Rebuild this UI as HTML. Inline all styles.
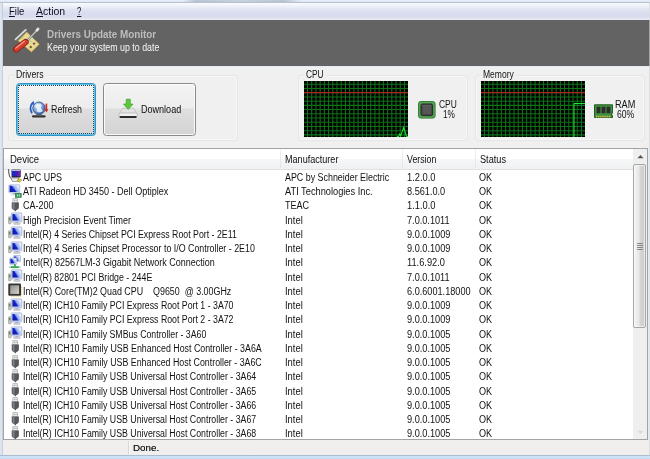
<!DOCTYPE html>
<html lang="en"><head><meta charset="utf-8"><title>Drivers Update Monitor</title>
<style>
html,body{margin:0;padding:0}
body{width:650px;height:459px;overflow:hidden;position:relative;background:#e4ecf6;font-family:"Liberation Sans",sans-serif;color:#111}
#root{position:absolute;left:0;top:0;width:650px;height:459px;will-change:transform;background:#e4ecf6}
.a{position:absolute}
.t{position:absolute;white-space:nowrap;transform-origin:0 50%}
.grp{position:absolute;border:1px solid #e6e6e6;border-radius:3px;box-sizing:border-box;box-shadow:inset 0 0 0 1px #f6f6f6}
.gl{position:absolute;background:#f0f0f0;height:10px}
.btn{position:absolute;box-sizing:border-box;border:1px solid #8a8a8a;border-radius:3.500px;background:linear-gradient(#f3f3f3,#ededed 46%,#dfdfdf 50%,#d3d3d3);box-shadow:inset 0 0 0 1px #fbfbfb}
.graph{position:absolute;background-color:#000;overflow:hidden}
.ic{position:absolute;left:0;top:0;width:15px;height:15px}
.r{position:absolute;left:0;width:630px;height:14px}
.hs{position:absolute;top:149px;width:1px;height:19px;background:linear-gradient(#f0f1f2,#e3e4e5)}
</style></head><body><div id="root">

<svg class="a" width="0" height="0" style="left:0;top:0"><defs><linearGradient id="scr" x1="0" y1=".75" x2="1" y2=".25"><stop offset="0" stop-color="#0a14a0"/><stop offset=".42" stop-color="#1426c8"/><stop offset=".56" stop-color="#8aa4f0"/><stop offset="1" stop-color="#eef2ff"/></linearGradient><linearGradient id="die" x1="0" y1="0" x2="1" y2="1"><stop offset="0" stop-color="#8e8e8c"/><stop offset="1" stop-color="#d2d2d0"/></linearGradient><linearGradient id="bat" x1="0" y1="0" x2="1" y2="0"><stop offset="0" stop-color="#1a2ec8"/><stop offset=".5" stop-color="#2a22b4"/><stop offset="1" stop-color="#8a1fb0"/></linearGradient></defs></svg>
<div class="a" style="left:0;top:0;width:650px;height:3px;background:linear-gradient(#e9f0fa,#dfe8f4 60%,#9aa6b2)"></div>
<div class="a" style="left:0;top:3px;width:3px;height:452px;background:linear-gradient(90deg,#dde5f1,#dbe3ef 70%,#aeb6c0)"></div>
<div class="a" style="left:649px;top:3px;width:1px;height:452px;background:#dcdfe4"></div><div class="a" style="left:649px;top:20px;width:1px;height:46px;background:#a4a4a4"></div>
<div class="a" style="left:0;top:455px;width:650px;height:4px;background:linear-gradient(#93a1b0,#c9dff5 28%,#d2e6fa 60%,#bcd7f3)"></div>
<div class="a" style="left:182px;top:0;width:120px;height:1.500px;background:linear-gradient(90deg,rgba(130,148,168,0),rgba(130,148,168,.45) 12%,rgba(130,148,168,.3) 50%,rgba(130,148,168,.45) 85%,rgba(130,148,168,0))"></div>
<div class="a" style="left:3px;top:3px;width:646px;height:17.500px;background:linear-gradient(#fafbfe,#eef1f9 18%,#dee2f1 40%,#d8dcee 62%,#d9ddee 78%,#e6e9f4 90%,#f4f5fa)"></div>
<span class="t" id="mFile" style="left:9.20px;top:6.10px;font-size:10.1px;line-height:12px;transform:scaleX(0.9405);color:#101020"><u>F</u>ile</span>
<span class="t" id="mAction" style="left:36.00px;top:6.10px;font-size:10.1px;line-height:12px;transform:scaleX(1.0370);color:#101020"><u>A</u>ction</span>
<span class="t" id="mQ" style="left:77.00px;top:6.10px;font-size:10.1px;line-height:12px;transform:scaleX(0.7644);color:#101020"><u>?</u></span>
<div class="a" style="left:3px;top:20.200px;width:646px;height:46.300px;background:#636363"></div>
<svg class="a" style="left:8px;top:22px" width="40" height="40" viewBox="8 22 40 40"><path d="M27.200 32.600L39.900 44.800 32 52.600 18.500 41.300z" fill="#4e4a40" opacity=".55"/><path d="M26.700 32L39.400 44.200 31.500 52 18 40.700z" fill="#e9d994" stroke="#b89e52" stroke-width=".8"/><path d="M30.700 45.400l1.600 1.500-1.500 1.500-1.600-1.500zM34 42.200l1.500 1.500-1.400 1.400-1.600-1.500z" fill="#6a5a3a"/><path d="M27.500 43l1 1M30 40.500l1 1M33.500 38.500l1 1" stroke="#5aa0c0" stroke-width="1"/><path d="M21 38.500l2-2" stroke="#a8c848" stroke-width="1.200"/><path d="M15.600 39.600L25.800 30" stroke="#7c7c7c" stroke-width="2.800" stroke-linecap="round"/><path d="M15.600 39.300L25.800 29.700" stroke="#e4e4e4" stroke-width="1.500" stroke-linecap="round"/><path d="M27 41L36.800 30.400" stroke="#6e6e6e" stroke-width="2"/><path d="M27 41L36.800 30.400" stroke="#d2d2d2" stroke-width="1.100"/><ellipse cx="37.400" cy="29.700" rx="2.500" ry="1.400" transform="rotate(-48 37.400 29.700)" fill="#f0f0f0" stroke="#8a8a8a" stroke-width=".4"/><path d="M16.300 49.300L25.600 42" stroke="#86190f" stroke-width="6.200" stroke-linecap="round"/><path d="M16.300 49.300L25.600 42" stroke="#d63b2b" stroke-width="4.800" stroke-linecap="round"/><path d="M15.800 48L24.400 41.300" stroke="#f3a092" stroke-width="1.300" stroke-linecap="round"/></svg>
<span class="t" id="title" style="left:46.80px;top:28.54px;font-size:10px;line-height:12px;transform:scaleX(0.9867);font-weight:bold;color:#bdbdbd">Drivers Update Monitor</span>
<span class="t" id="sub" style="left:47.40px;top:42.33px;font-size:10px;line-height:12px;transform:scaleX(0.8823);color:#f6f6f6">Keep your system up to date</span>
<div class="a" style="left:3px;top:66.500px;width:646px;height:82px;background:#f0f0f0"></div>
<div class="grp" style="left:8px;top:75px;width:230px;height:66px"></div>
<div class="gl" style="left:14px;top:70px;width:31px"></div>
<span class="t" id="gDrivers" style="left:15.80px;top:68.53px;font-size:10px;line-height:12px;transform:scaleX(0.8684);">Drivers</span>
<div class="grp" style="left:298px;top:75px;width:170px;height:66px"></div>
<div class="gl" style="left:304px;top:70px;width:22px"></div>
<span class="t" id="gCPU" style="left:306.20px;top:68.53px;font-size:10px;line-height:12px;transform:scaleX(0.8337);">CPU</span>
<div class="grp" style="left:475px;top:75px;width:170px;height:66px"></div>
<div class="gl" style="left:481px;top:70px;width:35px"></div>
<span class="t" id="gMem" style="left:483.00px;top:68.53px;font-size:10px;line-height:12px;transform:scaleX(0.8526);">Memory</span>
<div class="btn" style="left:16px;top:83px;width:80px;height:53px;border:1px solid #2f93c6;box-shadow:inset 0 0 0 1px #63bfe8"><div class="a" style="left:1px;top:1px;right:1px;bottom:1px;border:1px dotted #1f4656;border-radius:1px"></div></div>
<svg class="a" style="left:28px;top:100px" width="21" height="19" viewBox="28 100 21 19"><defs><radialGradient id="glb" cx=".35" cy=".3" r=".8"><stop offset="0" stop-color="#e6f0fc"/><stop offset=".45" stop-color="#7fa6dc"/><stop offset="1" stop-color="#2f5aa6"/></radialGradient></defs><rect x="32" y="115.200" width="13.600" height="2.300" rx="1.100" fill="#333"/><rect x="36.300" y="113.600" width="5.400" height="2" fill="#5d6470"/><circle cx="39" cy="108.200" r="6.200" fill="url(#glb)" stroke="#3b5688" stroke-width=".9"/><path d="M35.200 105.400c1.600-1.800 4.400-2.200 6.400-1 .4 1.400-.8 2.400-.4 3.800.4 1.200 1.600 1.600 1.400 3-1.800 1.400-4.600 1.400-6.200-.2.800-1.400.4-2.400-.2-3.400-.4-.8-1-1.400-1-2.200z" fill="#eef4fc" opacity=".85"/><path d="M32.800 102.600a9 9 0 0 0-.8 10.600" fill="none" stroke="#2a5cc4" stroke-width="1.700"/><path d="M30.600 104.200l3-3.400.9 3.900z" fill="#2a5cc4"/><path d="M46.400 103.600v6.600" stroke="#d8261e" stroke-width="1.700"/><path d="M44.400 109.200h4l-2 3.400z" fill="#d8261e"/></svg>
<span class="t" id="bRefresh" style="left:51.40px;top:104.47px;font-size:10.2px;line-height:12px;transform:scaleX(0.8693);">Refresh</span>
<div class="btn" style="left:103px;top:83px;width:93px;height:53px"></div>
<svg class="a" style="left:118px;top:98px" width="21" height="22" viewBox="118 98 21 22"><path d="M119.200 114.600l3.300-6.400h11.300l3.200 6.400z" fill="#e2e2e2" stroke="#b4b4b4" stroke-width=".6"/><rect x="119" y="113" width="18.200" height="4" rx="1.200" fill="#f1f1f1" stroke="#a6a6a6" stroke-width=".6"/><rect x="119.600" y="116" width="17" height="1.900" rx=".6" fill="#2c2c2c"/><path d="M126.200 99.200h4.100v4.800h2.700l-4.750 5.400-4.750-5.400h2.700z" fill="#5ccb3b" stroke="#2f9420" stroke-width=".6"/></svg>
<span class="t" id="bDownload" style="left:141.40px;top:104.47px;font-size:10.2px;line-height:12px;transform:scaleX(0.8874);">Download</span>
<svg class="a" style="left:303.7px;top:81px" width="104" height="56" viewBox="0 0 104 56"><rect width="104" height="56" fill="#000"/><g stroke="#0c7319" stroke-width="1.050"><path d="M3.50 0V56"/><path d="M7.71 0V56"/><path d="M11.93 0V56"/><path d="M16.14 0V56"/><path d="M20.36 0V56"/><path d="M24.57 0V56"/><path d="M28.79 0V56"/><path d="M33.00 0V56"/><path d="M37.22 0V56"/><path d="M41.44 0V56"/><path d="M45.65 0V56"/><path d="M49.87 0V56"/><path d="M54.08 0V56"/><path d="M58.30 0V56"/><path d="M62.51 0V56"/><path d="M66.73 0V56"/><path d="M70.94 0V56"/><path d="M75.16 0V56"/><path d="M79.37 0V56"/><path d="M83.59 0V56"/><path d="M87.80 0V56"/><path d="M92.02 0V56"/><path d="M96.23 0V56"/><path d="M100.45 0V56"/><path d="M0 3.30H104"/><path d="M0 7.51H104"/><path d="M0 11.73H104"/><path d="M0 15.95H104"/><path d="M0 20.16H104"/><path d="M0 24.38H104"/><path d="M0 28.59H104"/><path d="M0 32.80H104"/><path d="M0 37.02H104"/><path d="M0 41.23H104"/><path d="M0 45.45H104"/><path d="M0 49.67H104"/><path d="M0 53.88H104"/></g><path d="M0 11.700H104" stroke="#a82519" stroke-width="1.300"/><path d="M93 55.500h1.500l1.200-2.500 1 2 3-8.700 2.800 9.200h1.500" fill="none" stroke="#19e02c" stroke-width="1.050"/></svg>
<svg class="a" style="left:480.5px;top:81px" width="104" height="56" viewBox="0 0 104 56"><rect width="104" height="56" fill="#000"/><g stroke="#0c7319" stroke-width="1.050"><path d="M3.50 0V56"/><path d="M7.71 0V56"/><path d="M11.93 0V56"/><path d="M16.14 0V56"/><path d="M20.36 0V56"/><path d="M24.57 0V56"/><path d="M28.79 0V56"/><path d="M33.00 0V56"/><path d="M37.22 0V56"/><path d="M41.44 0V56"/><path d="M45.65 0V56"/><path d="M49.87 0V56"/><path d="M54.08 0V56"/><path d="M58.30 0V56"/><path d="M62.51 0V56"/><path d="M66.73 0V56"/><path d="M70.94 0V56"/><path d="M75.16 0V56"/><path d="M79.37 0V56"/><path d="M83.59 0V56"/><path d="M87.80 0V56"/><path d="M92.02 0V56"/><path d="M96.23 0V56"/><path d="M100.45 0V56"/><path d="M0 3.30H104"/><path d="M0 7.51H104"/><path d="M0 11.73H104"/><path d="M0 15.95H104"/><path d="M0 20.16H104"/><path d="M0 24.38H104"/><path d="M0 28.59H104"/><path d="M0 32.80H104"/><path d="M0 37.02H104"/><path d="M0 41.23H104"/><path d="M0 45.45H104"/><path d="M0 49.67H104"/><path d="M0 53.88H104"/></g><path d="M0 11.700H104" stroke="#a82519" stroke-width="1.300"/><path d="M93 56V22.500H104" fill="none" stroke="#22ea34" stroke-width="1"/></svg>
<svg class="a" style="left:418px;top:101px" width="18" height="18" viewBox="0 0 18 18"><rect x=".5" y=".5" width="16.600" height="16.600" rx="2.300" fill="#4a984a" stroke="#357f35"/><rect x="1.600" y="1.600" width="14.400" height="14.400" rx="1.800" fill="none" stroke="#62ac62" stroke-width=".7"/><rect x="3" y="3" width="11.600" height="11.600" rx="1.500" fill="#454545" stroke="#2c2c2c"/><rect x="4.600" y="4.600" width="8.400" height="8.400" rx=".6" fill="#565656"/><path d="M4.600 4.600h8.400" stroke="#6a6a6a" stroke-width=".8"/></svg>
<span class="t" id="cpu1" style="left:439.40px;top:98.53px;font-size:10px;line-height:12px;transform:scaleX(0.8430);">CPU</span>
<span class="t" id="cpu2" style="left:443.20px;top:109.23px;font-size:10px;line-height:12px;transform:scaleX(0.8242);">1%</span>
<svg class="a" style="left:593.500px;top:103.500px" width="19" height="16" viewBox="0 0 19 16"><path d="M.5 .8h18v8.500h-1v2h1v2.200h-18z" fill="#3f8f3f" stroke="#205f20"/><rect x="2.600" y="2.800" width="3.800" height="6.400" fill="#2c2c2c"/><rect x="7.600" y="2.800" width="3.800" height="6.400" fill="#2c2c2c"/><rect x="12.600" y="2.800" width="3.800" height="6.400" fill="#2c2c2c"/><path d="M2 12.600h15" stroke="#d9bb4a" stroke-width="1.800" stroke-dasharray="1.300 .8"/></svg>
<span class="t" id="ram1" style="left:615.40px;top:98.53px;font-size:10px;line-height:12px;transform:scaleX(0.9134);">RAM</span>
<span class="t" id="ram2" style="left:617.20px;top:109.23px;font-size:10px;line-height:12px;transform:scaleX(0.8600);">60%</span>
<div class="a" style="left:3px;top:147.500px;width:645px;height:292px;background:#fff;border:1px solid #a3a3a3;box-sizing:border-box"></div>
<div class="a" style="left:4px;top:149px;width:629px;height:21px;background:linear-gradient(#fff,#fff 48%,#f6f7f8 52%,#eff0f1);border-bottom:1px solid #dfe0e1;box-sizing:border-box"></div>
<div class="hs" style="left:280px"></div>
<div class="hs" style="left:402px"></div>
<div class="hs" style="left:474.5px"></div>
<div class="hs" style="left:632.5px"></div>
<span class="t" id="hDev" style="left:10.00px;top:153.94px;font-size:10.0px;line-height:12px;transform:scaleX(0.9517);">Device</span>
<span class="t" id="hMan" style="left:285.20px;top:153.94px;font-size:10.0px;line-height:12px;transform:scaleX(0.9065);">Manufacturer</span>
<span class="t" id="hVer" style="left:407.20px;top:153.94px;font-size:10.0px;line-height:12px;transform:scaleX(0.8787);">Version</span>
<span class="t" id="hSta" style="left:479.50px;top:153.94px;font-size:10.0px;line-height:12px;transform:scaleX(0.9168);">Status</span>
<svg class="ic" style="left:8px;top:168.30px" viewBox="0 0 15 15"><path d="M.6 1.200c.2 3.800.4 6.400 1.600 8.200 1 1.600 2.200 2.400 3.600 3.200" fill="none" stroke="#2c2c2c" stroke-width=".9"/><rect x="3.500" y="1.400" width="9.200" height="8.200" rx="1" fill="#23232b"/><rect x="4" y="2.400" width="8.200" height="6" fill="url(#bat)"/><rect x="4" y="1.800" width="8.200" height="1" fill="#dfe6f6"/><path d="M3 10h7.600l.9 3.400h-7.200z" fill="#ececec" stroke="#555" stroke-width=".5"/><path d="M9 12.400l2.400-1.600 2.400 1.300-2.400 2z" fill="#e6d422" stroke="#7f7208" stroke-width=".5"/></svg>
<span class="t" id="d0" style="left:22.80px;top:171.84px;font-size:10.0px;line-height:12px;transform:scaleX(0.8883);">APC UPS</span>
<span class="t" id="m0" style="left:285.00px;top:171.84px;font-size:10.0px;line-height:12px;transform:scaleX(0.8885);">APC by Schneider Electric</span>
<span class="t" id="v0" style="left:406.80px;top:171.84px;font-size:10.0px;line-height:12px;transform:scaleX(0.9317);">1.2.0.0</span>
<span class="t" id="s0" style="left:479.40px;top:171.84px;font-size:10.0px;line-height:12px;transform:scaleX(0.9070);">OK</span>
<svg class="ic" style="left:8px;top:182.55px" viewBox="0 0 15 15"><rect x=".8" y="1.800" width="11" height="8" rx=".8" fill="#e3eafa" stroke="#93a2c4" stroke-width=".6"/><rect x="1.600" y="2.600" width="9.400" height="6.400" fill="url(#scr)"/><rect x="4.600" y="9.900" width="3" height="1.300" fill="#aeb4c2"/><rect x="2.600" y="11" width="5" height="1.300" rx=".5" fill="#d3d8e2"/><rect x="7.400" y="10.300" width="5.800" height="4" fill="#2f9a58" stroke="#1c6c3a" stroke-width=".6"/><rect x="8.800" y="11.400" width="1.300" height="2" fill="#a6e0b8"/><rect x="10.700" y="11.400" width="1.300" height="2" fill="#a6e0b8"/></svg>
<span class="t" id="d1" style="left:22.80px;top:186.09px;font-size:10.0px;line-height:12px;transform:scaleX(0.9062);">ATI Radeon HD 3450 - Dell Optiplex</span>
<span class="t" id="m1" style="left:285.00px;top:186.09px;font-size:10.0px;line-height:12px;transform:scaleX(0.9251);">ATI Technologies Inc.</span>
<span class="t" id="v1" style="left:406.80px;top:186.09px;font-size:10.0px;line-height:12px;transform:scaleX(0.9157);">8.561.0.0</span>
<span class="t" id="s1" style="left:479.40px;top:186.09px;font-size:10.0px;line-height:12px;transform:scaleX(0.9070);">OK</span>
<svg class="ic" style="left:8px;top:196.80px" viewBox="0 0 15 15"><rect x="4.900" y="1.700" width="4.600" height="4" fill="#ececec" stroke="#a4a4a4" stroke-width=".7"/><rect x="6" y="2.900" width=".9" height="1" fill="#9a9a9a"/><rect x="7.600" y="2.900" width=".9" height="1" fill="#9a9a9a"/><path d="M3.700 5.600h7.200v5c0 1.400-1.600 2.300-2.600 2.700l-1 1.200-1-1.200c-1-.4-2.600-1.300-2.600-2.700z" fill="#57575d"/><path d="M4.600 6h1.900v6.600c-1-.5-1.900-1.200-1.900-2.200z" fill="#7f7f86"/></svg>
<span class="t" id="d2" style="left:22.80px;top:200.34px;font-size:10.0px;line-height:12px;transform:scaleX(0.8996);">CA-200</span>
<span class="t" id="m2" style="left:285.00px;top:200.34px;font-size:10.0px;line-height:12px;transform:scaleX(0.9036);">TEAC</span>
<span class="t" id="v2" style="left:406.80px;top:200.34px;font-size:10.0px;line-height:12px;transform:scaleX(0.9317);">1.1.0.0</span>
<span class="t" id="s2" style="left:479.40px;top:200.34px;font-size:10.0px;line-height:12px;transform:scaleX(0.9070);">OK</span>
<svg class="ic" style="left:8px;top:211.05px" viewBox="0 0 15 15"><rect x=".4" y="5.800" width="2.800" height="7" rx=".8" fill="#c9cbbf" stroke="#8f9388" stroke-width=".6"/><rect x="1.100" y="7" width="1.200" height="2.400" fill="#5c7a5c"/><rect x="3.300" y="1.900" width="10.500" height="9" rx=".9" fill="#e3eafa" stroke="#93a2c4" stroke-width=".7"/><rect x="4.400" y="3" width="8.300" height="6.600" fill="url(#scr)"/><rect x="7.300" y="11" width="3" height="1.200" fill="#aeb4c2"/><rect x="5.600" y="12" width="6.600" height="1.400" rx=".6" fill="#d3d8e2" stroke="#9aa0ae" stroke-width=".4"/></svg>
<span class="t" id="d3" style="left:22.80px;top:214.59px;font-size:10.0px;line-height:12px;transform:scaleX(0.8955);">High Precision Event Timer</span>
<span class="t" id="m3" style="left:285.00px;top:214.59px;font-size:10.0px;line-height:12px;transform:scaleX(0.9415);">Intel</span>
<span class="t" id="v3" style="left:406.80px;top:214.59px;font-size:10.0px;line-height:12px;transform:scaleX(0.9156);">7.0.0.1011</span>
<span class="t" id="s3" style="left:479.40px;top:214.59px;font-size:10.0px;line-height:12px;transform:scaleX(0.9070);">OK</span>
<svg class="ic" style="left:8px;top:225.30px" viewBox="0 0 15 15"><rect x=".4" y="5.800" width="2.800" height="7" rx=".8" fill="#c9cbbf" stroke="#8f9388" stroke-width=".6"/><rect x="1.100" y="7" width="1.200" height="2.400" fill="#5c7a5c"/><rect x="3.300" y="1.900" width="10.500" height="9" rx=".9" fill="#e3eafa" stroke="#93a2c4" stroke-width=".7"/><rect x="4.400" y="3" width="8.300" height="6.600" fill="url(#scr)"/><rect x="7.300" y="11" width="3" height="1.200" fill="#aeb4c2"/><rect x="5.600" y="12" width="6.600" height="1.400" rx=".6" fill="#d3d8e2" stroke="#9aa0ae" stroke-width=".4"/></svg>
<span class="t" id="d4" style="left:22.80px;top:228.84px;font-size:10.0px;line-height:12px;transform:scaleX(0.8769);">Intel(R) 4 Series Chipset PCI Express Root Port - 2E11</span>
<span class="t" id="m4" style="left:285.00px;top:228.84px;font-size:10.0px;line-height:12px;transform:scaleX(0.9415);">Intel</span>
<span class="t" id="v4" style="left:406.80px;top:228.84px;font-size:10.0px;line-height:12px;transform:scaleX(0.9183);">9.0.0.1009</span>
<span class="t" id="s4" style="left:479.40px;top:228.84px;font-size:10.0px;line-height:12px;transform:scaleX(0.9070);">OK</span>
<svg class="ic" style="left:8px;top:239.55px" viewBox="0 0 15 15"><rect x=".4" y="5.800" width="2.800" height="7" rx=".8" fill="#c9cbbf" stroke="#8f9388" stroke-width=".6"/><rect x="1.100" y="7" width="1.200" height="2.400" fill="#5c7a5c"/><rect x="3.300" y="1.900" width="10.500" height="9" rx=".9" fill="#e3eafa" stroke="#93a2c4" stroke-width=".7"/><rect x="4.400" y="3" width="8.300" height="6.600" fill="url(#scr)"/><rect x="7.300" y="11" width="3" height="1.200" fill="#aeb4c2"/><rect x="5.600" y="12" width="6.600" height="1.400" rx=".6" fill="#d3d8e2" stroke="#9aa0ae" stroke-width=".4"/></svg>
<span class="t" id="d5" style="left:22.80px;top:243.09px;font-size:10.0px;line-height:12px;transform:scaleX(0.8836);">Intel(R) 4 Series Chipset Processor to I/O Controller - 2E10</span>
<span class="t" id="m5" style="left:285.00px;top:243.09px;font-size:10.0px;line-height:12px;transform:scaleX(0.9415);">Intel</span>
<span class="t" id="v5" style="left:406.80px;top:243.09px;font-size:10.0px;line-height:12px;transform:scaleX(0.9183);">9.0.0.1009</span>
<span class="t" id="s5" style="left:479.40px;top:243.09px;font-size:10.0px;line-height:12px;transform:scaleX(0.9070);">OK</span>
<svg class="ic" style="left:8px;top:253.80px" viewBox="0 0 15 15"><rect x="5.400" y="1.500" width="7.200" height="6" rx=".7" fill="#e3eafa" stroke="#93a2c4" stroke-width=".6"/><rect x="6.200" y="2.300" width="5.600" height="4.400" fill="url(#scr)"/><rect x="1.600" y="4" width="7.200" height="6.300" rx=".7" fill="#e3eafa" stroke="#93a2c4" stroke-width=".6"/><rect x="2.400" y="4.800" width="5.600" height="4.600" fill="url(#scr)"/><rect x="6" y="10.300" width="1.800" height="2.200" fill="#1f9e40"/><rect x=".9" y="12.300" width="11.800" height="1.800" rx=".4" fill="#c4c8c8"/><rect x="3" y="12.300" width="7.600" height="1.800" fill="#25ad48"/></svg>
<span class="t" id="d6" style="left:22.80px;top:257.34px;font-size:10.0px;line-height:12px;transform:scaleX(0.8982);">Intel(R) 82567LM-3 Gigabit Network Connection</span>
<span class="t" id="m6" style="left:285.00px;top:257.34px;font-size:10.0px;line-height:12px;transform:scaleX(0.9415);">Intel</span>
<span class="t" id="v6" style="left:406.80px;top:257.34px;font-size:10.0px;line-height:12px;transform:scaleX(0.9252);">11.6.92.0</span>
<span class="t" id="s6" style="left:479.40px;top:257.34px;font-size:10.0px;line-height:12px;transform:scaleX(0.9070);">OK</span>
<svg class="ic" style="left:8px;top:268.05px" viewBox="0 0 15 15"><rect x=".4" y="5.800" width="2.800" height="7" rx=".8" fill="#c9cbbf" stroke="#8f9388" stroke-width=".6"/><rect x="1.100" y="7" width="1.200" height="2.400" fill="#5c7a5c"/><rect x="3.300" y="1.900" width="10.500" height="9" rx=".9" fill="#e3eafa" stroke="#93a2c4" stroke-width=".7"/><rect x="4.400" y="3" width="8.300" height="6.600" fill="url(#scr)"/><rect x="7.300" y="11" width="3" height="1.200" fill="#aeb4c2"/><rect x="5.600" y="12" width="6.600" height="1.400" rx=".6" fill="#d3d8e2" stroke="#9aa0ae" stroke-width=".4"/></svg>
<span class="t" id="d7" style="left:22.80px;top:271.59px;font-size:10.0px;line-height:12px;transform:scaleX(0.8811);">Intel(R) 82801 PCI Bridge - 244E</span>
<span class="t" id="m7" style="left:285.00px;top:271.59px;font-size:10.0px;line-height:12px;transform:scaleX(0.9415);">Intel</span>
<span class="t" id="v7" style="left:406.80px;top:271.59px;font-size:10.0px;line-height:12px;transform:scaleX(0.9156);">7.0.0.1011</span>
<span class="t" id="s7" style="left:479.40px;top:271.59px;font-size:10.0px;line-height:12px;transform:scaleX(0.9070);">OK</span>
<svg class="ic" style="left:8px;top:282.30px" viewBox="0 0 15 15"><rect x=".3" y="1.500" width="12.700" height="12.300" rx="1" fill="#37332f"/><rect x="2.200" y="3.300" width="8.900" height="8.600" fill="url(#die)"/><path d="M3 14.300h10.400M13.600 5v9" stroke="#c9a83a" stroke-width=".7" stroke-dasharray=".9 .9"/></svg>
<span class="t" id="d8" style="left:22.80px;top:285.84px;font-size:10.0px;line-height:12px;transform:scaleX(0.8897);">Intel(R) Core(TM)2 Quad CPU&nbsp;&nbsp;&nbsp;&nbsp;Q9650&nbsp;&nbsp;@ 3.00GHz</span>
<span class="t" id="m8" style="left:285.00px;top:285.84px;font-size:10.0px;line-height:12px;transform:scaleX(0.9415);">Intel</span>
<span class="t" id="v8" style="left:406.80px;top:285.84px;font-size:10.0px;line-height:12px;transform:scaleX(0.9149);">6.0.6001.18000</span>
<span class="t" id="s8" style="left:479.40px;top:285.84px;font-size:10.0px;line-height:12px;transform:scaleX(0.9070);">OK</span>
<svg class="ic" style="left:8px;top:296.55px" viewBox="0 0 15 15"><rect x=".4" y="5.800" width="2.800" height="7" rx=".8" fill="#c9cbbf" stroke="#8f9388" stroke-width=".6"/><rect x="1.100" y="7" width="1.200" height="2.400" fill="#5c7a5c"/><rect x="3.300" y="1.900" width="10.500" height="9" rx=".9" fill="#e3eafa" stroke="#93a2c4" stroke-width=".7"/><rect x="4.400" y="3" width="8.300" height="6.600" fill="url(#scr)"/><rect x="7.300" y="11" width="3" height="1.200" fill="#aeb4c2"/><rect x="5.600" y="12" width="6.600" height="1.400" rx=".6" fill="#d3d8e2" stroke="#9aa0ae" stroke-width=".4"/></svg>
<span class="t" id="d9" style="left:22.80px;top:300.09px;font-size:10.0px;line-height:12px;transform:scaleX(0.8768);">Intel(R) ICH10 Family PCI Express Root Port 1 - 3A70</span>
<span class="t" id="m9" style="left:285.00px;top:300.09px;font-size:10.0px;line-height:12px;transform:scaleX(0.9415);">Intel</span>
<span class="t" id="v9" style="left:406.80px;top:300.09px;font-size:10.0px;line-height:12px;transform:scaleX(0.9183);">9.0.0.1009</span>
<span class="t" id="s9" style="left:479.40px;top:300.09px;font-size:10.0px;line-height:12px;transform:scaleX(0.9070);">OK</span>
<svg class="ic" style="left:8px;top:310.80px" viewBox="0 0 15 15"><rect x=".4" y="5.800" width="2.800" height="7" rx=".8" fill="#c9cbbf" stroke="#8f9388" stroke-width=".6"/><rect x="1.100" y="7" width="1.200" height="2.400" fill="#5c7a5c"/><rect x="3.300" y="1.900" width="10.500" height="9" rx=".9" fill="#e3eafa" stroke="#93a2c4" stroke-width=".7"/><rect x="4.400" y="3" width="8.300" height="6.600" fill="url(#scr)"/><rect x="7.300" y="11" width="3" height="1.200" fill="#aeb4c2"/><rect x="5.600" y="12" width="6.600" height="1.400" rx=".6" fill="#d3d8e2" stroke="#9aa0ae" stroke-width=".4"/></svg>
<span class="t" id="d10" style="left:22.80px;top:314.34px;font-size:10.0px;line-height:12px;transform:scaleX(0.8768);">Intel(R) ICH10 Family PCI Express Root Port 2 - 3A72</span>
<span class="t" id="m10" style="left:285.00px;top:314.34px;font-size:10.0px;line-height:12px;transform:scaleX(0.9415);">Intel</span>
<span class="t" id="v10" style="left:406.80px;top:314.34px;font-size:10.0px;line-height:12px;transform:scaleX(0.9183);">9.0.0.1009</span>
<span class="t" id="s10" style="left:479.40px;top:314.34px;font-size:10.0px;line-height:12px;transform:scaleX(0.9070);">OK</span>
<svg class="ic" style="left:8px;top:325.05px" viewBox="0 0 15 15"><rect x=".4" y="5.800" width="2.800" height="7" rx=".8" fill="#c9cbbf" stroke="#8f9388" stroke-width=".6"/><rect x="1.100" y="7" width="1.200" height="2.400" fill="#5c7a5c"/><rect x="3.300" y="1.900" width="10.500" height="9" rx=".9" fill="#e3eafa" stroke="#93a2c4" stroke-width=".7"/><rect x="4.400" y="3" width="8.300" height="6.600" fill="url(#scr)"/><rect x="7.300" y="11" width="3" height="1.200" fill="#aeb4c2"/><rect x="5.600" y="12" width="6.600" height="1.400" rx=".6" fill="#d3d8e2" stroke="#9aa0ae" stroke-width=".4"/></svg>
<span class="t" id="d11" style="left:22.80px;top:328.59px;font-size:10.0px;line-height:12px;transform:scaleX(0.8749);">Intel(R) ICH10 Family SMBus Controller - 3A60</span>
<span class="t" id="m11" style="left:285.00px;top:328.59px;font-size:10.0px;line-height:12px;transform:scaleX(0.9415);">Intel</span>
<span class="t" id="v11" style="left:406.80px;top:328.59px;font-size:10.0px;line-height:12px;transform:scaleX(0.9183);">9.0.0.1005</span>
<span class="t" id="s11" style="left:479.40px;top:328.59px;font-size:10.0px;line-height:12px;transform:scaleX(0.9070);">OK</span>
<svg class="ic" style="left:8px;top:339.30px" viewBox="0 0 15 15"><rect x="4.900" y="1.700" width="4.600" height="4" fill="#ececec" stroke="#a4a4a4" stroke-width=".7"/><rect x="6" y="2.900" width=".9" height="1" fill="#9a9a9a"/><rect x="7.600" y="2.900" width=".9" height="1" fill="#9a9a9a"/><path d="M3.700 5.600h7.200v5c0 1.400-1.600 2.300-2.600 2.700l-1 1.200-1-1.200c-1-.4-2.600-1.300-2.600-2.700z" fill="#57575d"/><path d="M4.600 6h1.900v6.600c-1-.5-1.900-1.200-1.900-2.200z" fill="#7f7f86"/></svg>
<span class="t" id="d12" style="left:22.80px;top:342.84px;font-size:10.0px;line-height:12px;transform:scaleX(0.8837);">Intel(R) ICH10 Family USB Enhanced Host Controller - 3A6A</span>
<span class="t" id="m12" style="left:285.00px;top:342.84px;font-size:10.0px;line-height:12px;transform:scaleX(0.9415);">Intel</span>
<span class="t" id="v12" style="left:406.80px;top:342.84px;font-size:10.0px;line-height:12px;transform:scaleX(0.9183);">9.0.0.1005</span>
<span class="t" id="s12" style="left:479.40px;top:342.84px;font-size:10.0px;line-height:12px;transform:scaleX(0.9070);">OK</span>
<svg class="ic" style="left:8px;top:353.55px" viewBox="0 0 15 15"><rect x="4.900" y="1.700" width="4.600" height="4" fill="#ececec" stroke="#a4a4a4" stroke-width=".7"/><rect x="6" y="2.900" width=".9" height="1" fill="#9a9a9a"/><rect x="7.600" y="2.900" width=".9" height="1" fill="#9a9a9a"/><path d="M3.700 5.600h7.200v5c0 1.400-1.600 2.300-2.600 2.700l-1 1.200-1-1.200c-1-.4-2.600-1.300-2.600-2.700z" fill="#57575d"/><path d="M4.600 6h1.900v6.600c-1-.5-1.900-1.200-1.900-2.200z" fill="#7f7f86"/></svg>
<span class="t" id="d13" style="left:22.80px;top:357.09px;font-size:10.0px;line-height:12px;transform:scaleX(0.8819);">Intel(R) ICH10 Family USB Enhanced Host Controller - 3A6C</span>
<span class="t" id="m13" style="left:285.00px;top:357.09px;font-size:10.0px;line-height:12px;transform:scaleX(0.9415);">Intel</span>
<span class="t" id="v13" style="left:406.80px;top:357.09px;font-size:10.0px;line-height:12px;transform:scaleX(0.9183);">9.0.0.1005</span>
<span class="t" id="s13" style="left:479.40px;top:357.09px;font-size:10.0px;line-height:12px;transform:scaleX(0.9070);">OK</span>
<svg class="ic" style="left:8px;top:367.80px" viewBox="0 0 15 15"><rect x="4.900" y="1.700" width="4.600" height="4" fill="#ececec" stroke="#a4a4a4" stroke-width=".7"/><rect x="6" y="2.900" width=".9" height="1" fill="#9a9a9a"/><rect x="7.600" y="2.900" width=".9" height="1" fill="#9a9a9a"/><path d="M3.700 5.600h7.200v5c0 1.400-1.600 2.300-2.600 2.700l-1 1.200-1-1.200c-1-.4-2.600-1.300-2.600-2.700z" fill="#57575d"/><path d="M4.600 6h1.900v6.600c-1-.5-1.900-1.200-1.900-2.200z" fill="#7f7f86"/></svg>
<span class="t" id="d14" style="left:22.80px;top:371.34px;font-size:10.0px;line-height:12px;transform:scaleX(0.8779);">Intel(R) ICH10 Family USB Universal Host Controller - 3A64</span>
<span class="t" id="m14" style="left:285.00px;top:371.34px;font-size:10.0px;line-height:12px;transform:scaleX(0.9415);">Intel</span>
<span class="t" id="v14" style="left:406.80px;top:371.34px;font-size:10.0px;line-height:12px;transform:scaleX(0.9183);">9.0.0.1005</span>
<span class="t" id="s14" style="left:479.40px;top:371.34px;font-size:10.0px;line-height:12px;transform:scaleX(0.9070);">OK</span>
<svg class="ic" style="left:8px;top:382.05px" viewBox="0 0 15 15"><rect x="4.900" y="1.700" width="4.600" height="4" fill="#ececec" stroke="#a4a4a4" stroke-width=".7"/><rect x="6" y="2.900" width=".9" height="1" fill="#9a9a9a"/><rect x="7.600" y="2.900" width=".9" height="1" fill="#9a9a9a"/><path d="M3.700 5.600h7.200v5c0 1.400-1.600 2.300-2.600 2.700l-1 1.200-1-1.200c-1-.4-2.600-1.300-2.600-2.700z" fill="#57575d"/><path d="M4.600 6h1.900v6.600c-1-.5-1.900-1.200-1.900-2.200z" fill="#7f7f86"/></svg>
<span class="t" id="d15" style="left:22.80px;top:385.59px;font-size:10.0px;line-height:12px;transform:scaleX(0.8779);">Intel(R) ICH10 Family USB Universal Host Controller - 3A65</span>
<span class="t" id="m15" style="left:285.00px;top:385.59px;font-size:10.0px;line-height:12px;transform:scaleX(0.9415);">Intel</span>
<span class="t" id="v15" style="left:406.80px;top:385.59px;font-size:10.0px;line-height:12px;transform:scaleX(0.9183);">9.0.0.1005</span>
<span class="t" id="s15" style="left:479.40px;top:385.59px;font-size:10.0px;line-height:12px;transform:scaleX(0.9070);">OK</span>
<svg class="ic" style="left:8px;top:396.30px" viewBox="0 0 15 15"><rect x="4.900" y="1.700" width="4.600" height="4" fill="#ececec" stroke="#a4a4a4" stroke-width=".7"/><rect x="6" y="2.900" width=".9" height="1" fill="#9a9a9a"/><rect x="7.600" y="2.900" width=".9" height="1" fill="#9a9a9a"/><path d="M3.700 5.600h7.200v5c0 1.400-1.600 2.300-2.600 2.700l-1 1.200-1-1.200c-1-.4-2.600-1.300-2.600-2.700z" fill="#57575d"/><path d="M4.600 6h1.900v6.600c-1-.5-1.900-1.200-1.900-2.200z" fill="#7f7f86"/></svg>
<span class="t" id="d16" style="left:22.80px;top:399.84px;font-size:10.0px;line-height:12px;transform:scaleX(0.8779);">Intel(R) ICH10 Family USB Universal Host Controller - 3A66</span>
<span class="t" id="m16" style="left:285.00px;top:399.84px;font-size:10.0px;line-height:12px;transform:scaleX(0.9415);">Intel</span>
<span class="t" id="v16" style="left:406.80px;top:399.84px;font-size:10.0px;line-height:12px;transform:scaleX(0.9183);">9.0.0.1005</span>
<span class="t" id="s16" style="left:479.40px;top:399.84px;font-size:10.0px;line-height:12px;transform:scaleX(0.9070);">OK</span>
<svg class="ic" style="left:8px;top:410.55px" viewBox="0 0 15 15"><rect x="4.900" y="1.700" width="4.600" height="4" fill="#ececec" stroke="#a4a4a4" stroke-width=".7"/><rect x="6" y="2.900" width=".9" height="1" fill="#9a9a9a"/><rect x="7.600" y="2.900" width=".9" height="1" fill="#9a9a9a"/><path d="M3.700 5.600h7.200v5c0 1.400-1.600 2.300-2.600 2.700l-1 1.200-1-1.200c-1-.4-2.600-1.300-2.600-2.700z" fill="#57575d"/><path d="M4.600 6h1.900v6.600c-1-.5-1.900-1.200-1.900-2.200z" fill="#7f7f86"/></svg>
<span class="t" id="d17" style="left:22.80px;top:414.09px;font-size:10.0px;line-height:12px;transform:scaleX(0.8779);">Intel(R) ICH10 Family USB Universal Host Controller - 3A67</span>
<span class="t" id="m17" style="left:285.00px;top:414.09px;font-size:10.0px;line-height:12px;transform:scaleX(0.9415);">Intel</span>
<span class="t" id="v17" style="left:406.80px;top:414.09px;font-size:10.0px;line-height:12px;transform:scaleX(0.9183);">9.0.0.1005</span>
<span class="t" id="s17" style="left:479.40px;top:414.09px;font-size:10.0px;line-height:12px;transform:scaleX(0.9070);">OK</span>
<svg class="ic" style="left:8px;top:424.80px" viewBox="0 0 15 15"><rect x="4.900" y="1.700" width="4.600" height="4" fill="#ececec" stroke="#a4a4a4" stroke-width=".7"/><rect x="6" y="2.900" width=".9" height="1" fill="#9a9a9a"/><rect x="7.600" y="2.900" width=".9" height="1" fill="#9a9a9a"/><path d="M3.700 5.600h7.200v5c0 1.400-1.600 2.300-2.600 2.700l-1 1.200-1-1.200c-1-.4-2.600-1.300-2.600-2.700z" fill="#57575d"/><path d="M4.600 6h1.900v6.600c-1-.5-1.900-1.200-1.900-2.200z" fill="#7f7f86"/></svg>
<span class="t" id="d18" style="left:22.80px;top:428.34px;font-size:10.0px;line-height:12px;transform:scaleX(0.8779);">Intel(R) ICH10 Family USB Universal Host Controller - 3A68</span>
<span class="t" id="m18" style="left:285.00px;top:428.34px;font-size:10.0px;line-height:12px;transform:scaleX(0.9415);">Intel</span>
<span class="t" id="v18" style="left:406.80px;top:428.34px;font-size:10.0px;line-height:12px;transform:scaleX(0.9183);">9.0.0.1005</span>
<span class="t" id="s18" style="left:479.40px;top:428.34px;font-size:10.0px;line-height:12px;transform:scaleX(0.9070);">OK</span>
<div class="a" style="left:633px;top:148.500px;width:14px;height:290px;background:#efefef"></div>
<svg class="a" style="left:637px;top:154px" width="7" height="5" viewBox="0 0 7 5"><path d="M.4 4.200L3.500 1 6.600 4.200z" fill="#555"/></svg>
<div class="a" style="left:633.200px;top:164px;width:12.800px;height:164px;border:1px solid #a6a6a6;border-radius:2px;box-sizing:border-box;background:linear-gradient(90deg,#f4f4f4,#e8e8e8 45%,#d6d6d6 55%,#cccccc);box-shadow:inset 0 0 0 1px rgba(255,255,255,.6)"></div>
<div class="a" style="left:636.500px;top:243px;width:6px;height:1px;background:#868686;box-shadow:0 2px 0 #868686,0 4px 0 #868686,0 6px 0 #868686"></div>
<svg class="a" style="left:637px;top:430px" width="7" height="5" viewBox="0 0 7 5"><path d="M.4 .8L3.500 4 6.600 .8z" fill="#d9d9d9"/></svg>
<div class="a" style="left:3px;top:439.500px;width:646px;height:15.500px;background:#f0efee"></div>
<div class="a" style="left:128px;top:441px;width:1px;height:13px;background:#d6d6d6;box-shadow:1px 0 0 #fbfbfb"></div>
<span class="t" id="done" style="left:132.60px;top:441.60px;font-size:9.8px;line-height:12px;transform:scaleX(1.0019);color:#1e1e1e;text-shadow:0 0 .4px #444">Done.</span>
</div></body></html>
